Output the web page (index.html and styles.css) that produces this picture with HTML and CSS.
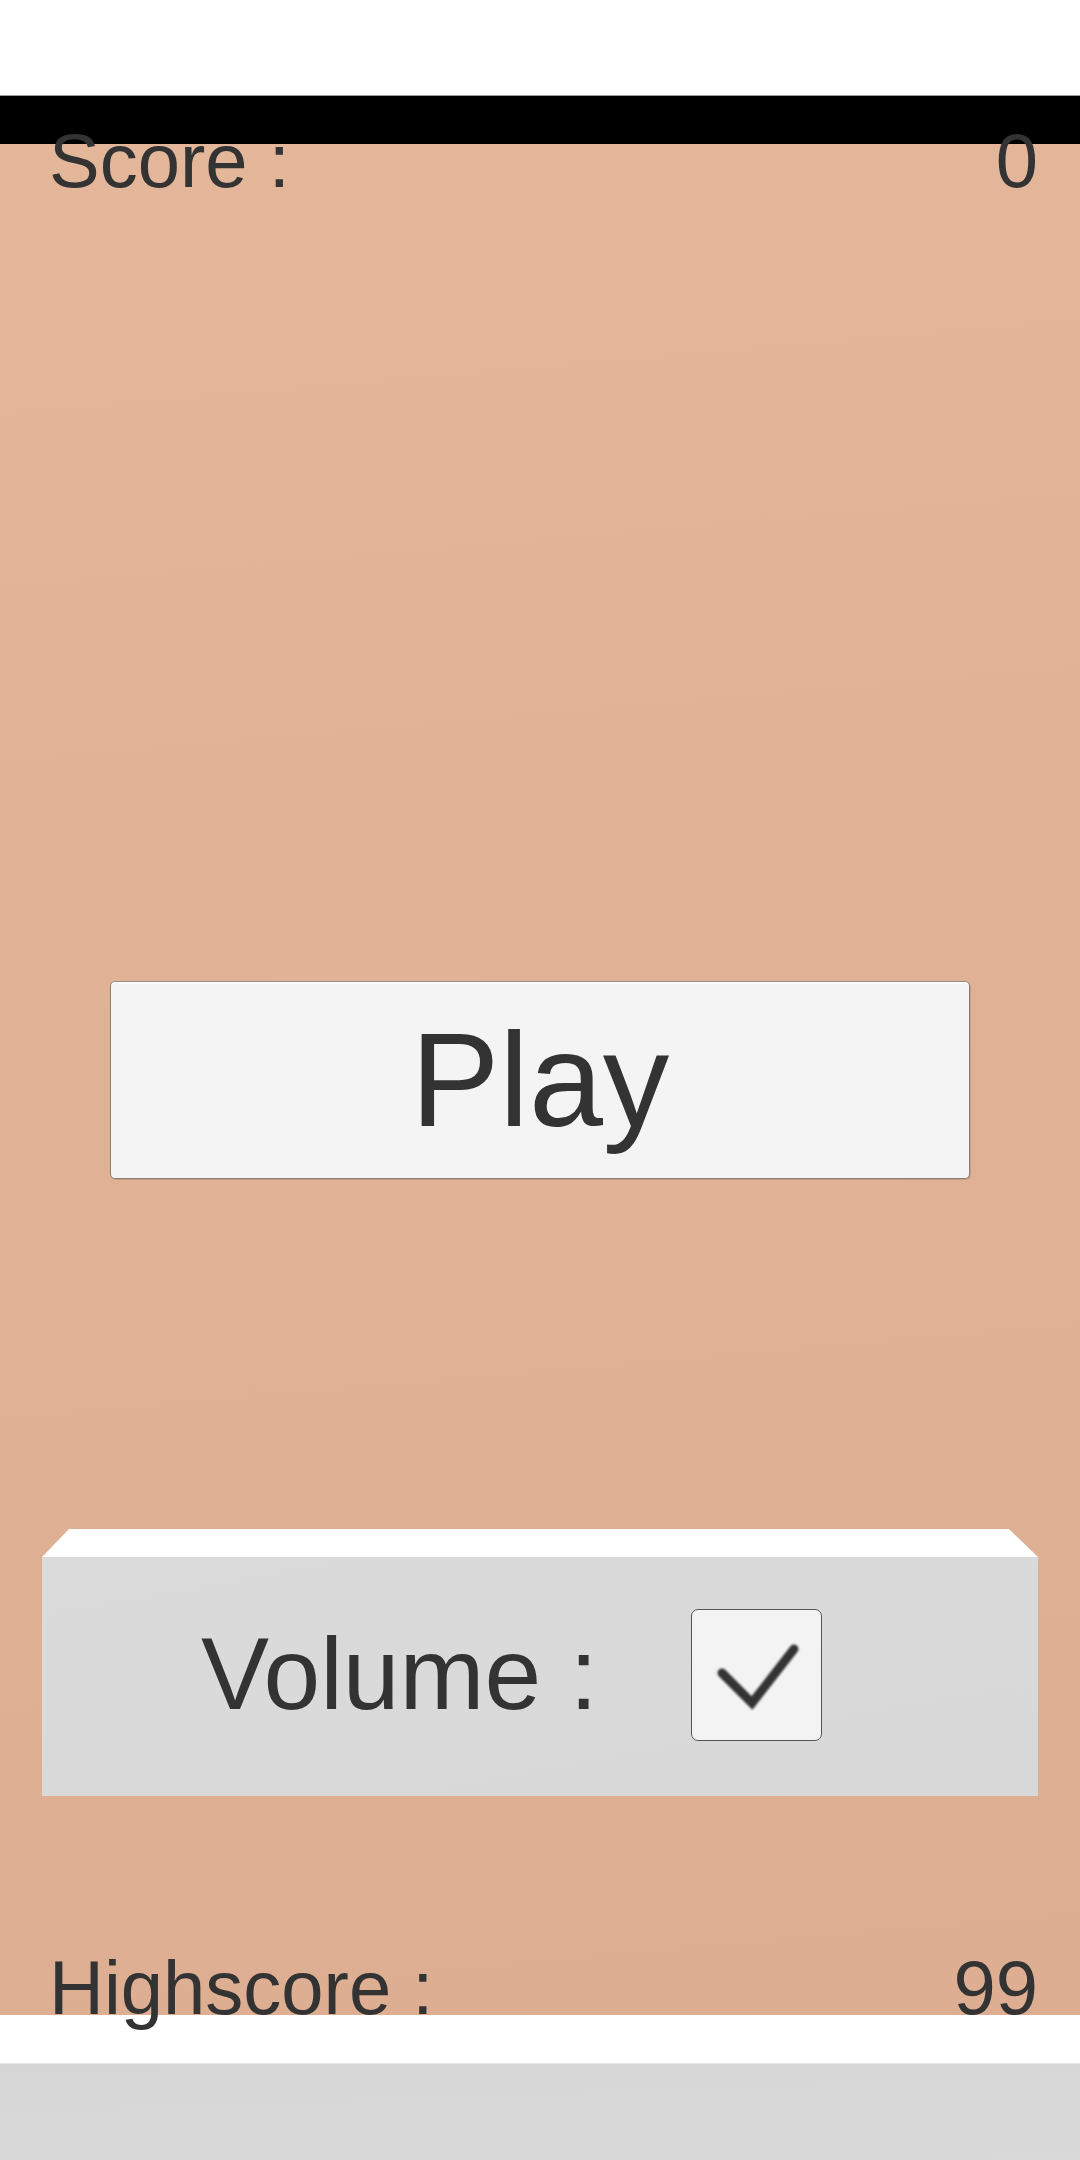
FILE: index.html
```html
<!DOCTYPE html>
<html>
<head>
<meta charset="utf-8">
<link rel="stylesheet" href="styles.css">
</head>
<body>
<div class="status-bar"></div>
<main class="screen">
  <div class="score-row">
    <span class="label">Score :</span>
    <span class="value">0</span>
  </div>
  <button class="play-btn">Play</button>
  <section class="volume-panel">
    <div class="bevel"></div>
    <div class="panel-body">
      <span class="volume-label">Volume :</span>
      <span class="checkbox">
        <svg class="check" viewBox="0 0 131 132" width="131" height="132">
          <polyline points="31,64 61,94 103,40" fill="none" stroke="#333" stroke-width="9" stroke-linecap="round" stroke-linejoin="miter"/>
        </svg>
      </span>
    </div>
  </section>
  <div class="score-row highscore-row">
    <span class="label">Highscore :</span>
    <span class="value">99</span>
  </div>
</main>
<div class="nav-white"></div>
<div class="nav-gray"></div>
</body>
</html>
```
FILE: styles.css
```css
html, body {
  margin: 0;
  padding: 0;
  width: 1080px;
  background: #ffffff;
  font-family: "Liberation Sans", Arial, sans-serif;
  color: #333333;
}

.status-bar {
  height: 95px;
  background: #ffffff;
}

.screen {
  box-sizing: border-box;
  height: 1920px;
  border-top: 1px solid #9a9a9a;
  background:
    linear-gradient(#000000, #000000) top left / 100% 48px no-repeat,
    linear-gradient(175deg, #e4b69a 0%, #e0b295 50%, #ddae91 100%);
  display: flex;
  flex-direction: column;
  align-items: center;
  padding-top: 23px;
}

.screen > * {
  flex-shrink: 0;
}

.score-row {
  align-self: stretch;
  display: flex;
  justify-content: space-between;
  font-size: 76px;
  line-height: 84px;
  padding: 0 42px 0 49px;
  position: relative;
}

.play-btn {
  margin-top: 778px;
  width: 860px;
  height: 198px;
  box-sizing: border-box;
  background: #f4f4f4;
  border: 1px solid #8a7e76;
  border-top-color: #9a8f88;
  border-radius: 5px;
  box-shadow: 1px 1px 0 rgba(0, 0, 0, 0.12), inset 0 2px 0 #fbfbfb;
  font-family: "Liberation Sans", Arial, sans-serif;
  font-size: 133px;
  color: #333333;
  padding: 0;
  line-height: 1;
}

.volume-panel {
  margin-top: 350px;
  width: 996px;
  display: flex;
  flex-direction: column;
}

.bevel {
  height: 0;
  border-bottom: 28px solid #ffffff;
  border-left: 27px solid transparent;
  border-right: 29px solid transparent;
}

.panel-body {
  height: 239px;
  background: linear-gradient(170deg, #dbdbdb, #d8d8d8);
  display: flex;
  align-items: center;
  padding-left: 159px;
  gap: 93px;
}

.volume-label {
  font-size: 102px;
  line-height: 1;
  margin-top: -6px;
}

.checkbox {
  box-sizing: border-box;
  width: 131px;
  height: 132px;
  border: 1px solid #555555;
  border-radius: 7px;
  background: #f3f3f3;
  display: flex;
  align-items: center;
  justify-content: center;
  margin-top: -3px;
}

.check {
  display: block;
  filter: blur(0.8px);
  margin: -1px;
}

.highscore-row {
  margin-top: 150px;
}

.nav-white {
  height: 49px;
  background: #ffffff;
  border-bottom: 1px solid #e8e8e8;
  box-sizing: border-box;
}

.nav-gray {
  height: 96px;
  background: linear-gradient(178deg, #d6d6d6, #d9d9d9);
}
```
